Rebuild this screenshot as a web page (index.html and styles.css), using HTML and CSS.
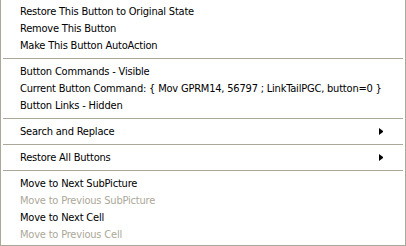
FILE: index.html
```
<!doctype html>
<html>
<head>
<meta charset="utf-8">
<link rel="stylesheet" href="styles.css">
</head>
<body>
	<div class="menu">
		<div class="item">Restore This Button to Original State</div>
		<div class="item">Remove This Button</div>
		<div class="item">Make This Button AutoAction</div>
		<div class="sep"></div>
		<div class="item">Button Commands - Visible</div>
		<div class="item">Current Button Command: { Mov GPRM14, 56797 ; LinkTailPGC, button=0 }</div>
		<div class="item">Button Links - Hidden</div>
		<div class="sep"></div>
		<div class="item sub">Search and Replace<span class="arrow"></span></div>
		<div class="sep"></div>
		<div class="item sub">Restore All Buttons<span class="arrow"></span></div>
		<div class="sep"></div>
		<div class="item">Move to Next SubPicture</div>
		<div class="item disabled">Move to Previous SubPicture</div>
		<div class="item">Move to Next Cell</div>
		<div class="item disabled">Move to Previous Cell</div>
	</div>
</body>
</html>
```
FILE: styles.css
```
html,body{
	margin:0;
	background:#fff;
}

.menu{
	width:404px;
	height:242px;
	border:solid #aca899 1px;
	border-top:none;
	padding-top:3px;
	background:#fff;
	font-family:"DejaVu Sans Condensed","DejaVu Sans",sans-serif;
	font-size:11px;
	letter-spacing:-0.2px;
	color:#000;
}

.item{
	height:17px;
	line-height:17px;
	padding-left:19px;
	white-space:nowrap;
	display:flex;
	align-items:center;
}

.disabled{
	color:#aca899;
}

.sub{
	justify-content:space-between;
	padding-right:22px;
}

.arrow{
	width:0;
	height:1px;
	border-left:4px solid #000;
	border-top:3px solid transparent;
	border-bottom:3px solid transparent;
}

.sep{
	height:9px;
	display:flex;
	align-items:center;
	padding:0 2px;
}

.sep::after{
	content:"";
	flex:1;
	height:1px;
	background:#aca899;
}
```
